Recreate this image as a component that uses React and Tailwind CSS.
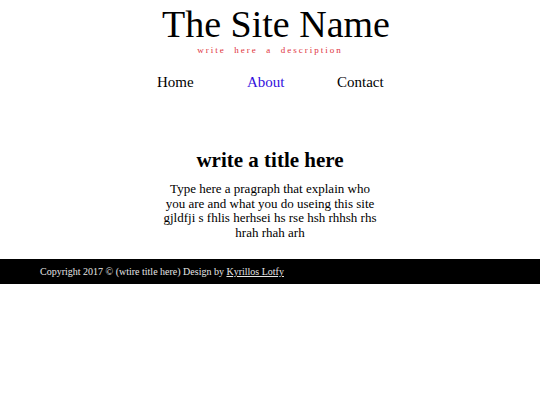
export default function App() {
  return (
    <div className="w-[540px] h-[405px] bg-white">
      <div className="font-['Liberation_Serif',serif] text-black">
        <header className="flex flex-col items-center pt-[3px]">
          <h1 className="text-[38px] leading-[42px] ml-[12px]">The Site Name</h1>
          <p className="text-[9px] leading-[10px] tracking-[2px] text-[#e0323c] mt-0">write&nbsp; here&nbsp; a&nbsp; description</p>
        </header>
        <nav className="flex justify-center gap-[54px] mt-[17px] text-[15px] leading-[20px]">
          <a className="w-[36px]">Home</a>
          <a className="w-[36px] text-[#3311dd]">About</a>
          <a className="w-[46px]">Contact</a>
        </nav>
        <main className="flex flex-col items-center mt-[56px]">
          <h2 className="text-[21px] leading-[24px] font-bold">write a title here</h2>
          <p className="w-[218px] text-center text-[13px] leading-[14.5px] mt-[10px]">Type here a pragraph that explain who you are and what you do useing this site gjldfji s fhlis herhsei hs rse hsh rhhsh rhs hrah rhah arh</p>
        </main>
        <footer className="mt-[19px] bg-black h-[25px] flex items-center px-[40px] text-[10px] text-[#e6e6e6]">
          <span>Copyright 2017 © (wtire title here) Design by <a className="underline">Kyrillos Lotfy</a></span>
        </footer>
      </div>
    </div>
  );
}
